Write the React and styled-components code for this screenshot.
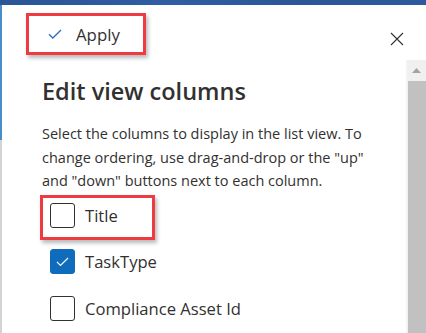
import React from "react";
import styled, { createGlobalStyle } from "styled-components";

const Global = createGlobalStyle`
  html, body { margin: 0; padding: 0; background: #ffffff; }
  body { font-family: "Open Sans", "Noto Sans", sans-serif; color: #323130; }
`;

const Frame = styled.div`
  width: 426px;
  height: 333px;
  overflow: hidden;
  display: flex;
  flex-direction: column;
  background: #ffffff;
`;

const TopStrip = styled.div`
  height: 5px;
  flex: none;
  background: linear-gradient(90deg, #2a5597 0%, #2f5ea3 40%, #2b5699 70%, #2d5a9e 100%);
`;

const Main = styled.div`
  flex: 1;
  display: flex;
  min-height: 0;
`;

const LeftEdge = styled.div`
  width: 2px;
  flex: none;
  display: flex;
  flex-direction: column;
`;

const EdgePart = styled.div`
  height: ${(p) => (p.$grow ? "auto" : `${p.$h}px`)};
  flex: ${(p) => (p.$grow ? 1 : "none")};
  background: ${(p) => p.$color};
`;

const Panel = styled.div`
  flex: 1;
  display: flex;
  flex-direction: column;
  min-width: 0;
`;

const Header = styled.div`
  height: 55px;
  flex: none;
  display: flex;
  align-items: flex-start;
  justify-content: space-between;
  padding: 8px 0 0 24px;
  box-sizing: border-box;
`;

const Highlight = styled.div`
  position: relative;
  align-self: flex-start;
  &::after {
    content: "";
    position: absolute;
    pointer-events: none;
    top: ${(p) => p.$t}px;
    left: ${(p) => p.$l}px;
    right: ${(p) => p.$r}px;
    bottom: ${(p) => p.$b}px;
    border: 3px solid #ee3b42;
    box-shadow: 2px 3px 4px rgba(0, 0, 0, 0.28);
  }
`;

const ApplyButton = styled.button`
  height: 42px;
  width: 120px;
  border: none;
  background: transparent;
  display: flex;
  align-items: center;
  gap: 14px;
  padding: 0 0 0 22px;
  font-family: inherit;
  font-size: 16.8px;
  color: #323130;
  cursor: pointer;
`;

const CloseButton = styled.button`
  margin: 14px 17px 0 0;
  width: 24px;
  height: 24px;
  border: none;
  background: transparent;
  padding: 0;
  display: flex;
  align-items: center;
  justify-content: center;
  color: #323130;
`;

const ScrollRow = styled.div`
  flex: 1;
  display: flex;
  min-height: 0;
`;

const Content = styled.div`
  flex: 1;
  padding: 14px 0 0 40px;
  min-width: 0;
`;

const Heading = styled.h2`
  margin: 0;
  font-size: 23.5px;
  line-height: 34px;
  font-weight: 600;
  color: #323130;
`;

const Description = styled.p`
  margin: 14px 0 0 0;
  font-size: 14.5px;
  line-height: 23.5px;
  color: #323130;
  white-space: nowrap;
`;

const List = styled.div`
  display: flex;
  flex-direction: column;
  gap: 21.5px;
  margin-top: 10px;
  padding-left: 8px;
`;

const Row = styled.label`
  display: flex;
  align-items: center;
  gap: 10px;
  font-size: 16.6px;
  color: #323130;
  height: 25px;
`;

const Box = styled.span`
  width: 25px;
  height: 25px;
  box-sizing: border-box;
  border-radius: 3px;
  border: 1px solid ${(p) => (p.$checked ? "#0f6cbd" : "#323130")};
  background: ${(p) => (p.$checked ? "#0f6cbd" : "#ffffff")};
  display: flex;
  align-items: center;
  justify-content: center;
  flex: none;
`;

const Scrollbar = styled.div`
  width: 19px;
  flex: none;
  display: flex;
  flex-direction: column;
  background: #f0f0f0;
  border-left: 1px solid #f4f4f4;
`;

const ArrowButton = styled.div`
  height: 21px;
  flex: none;
  display: flex;
  align-items: center;
  justify-content: center;
`;

const Thumb = styled.div`
  flex: 1;
  margin-left: 1px;
  background: #c1c1c1;
`;

const CheckIcon = ({ color, size = 14 }) => (
  <svg width={size} height={size * 0.72} viewBox="0 0 14 10" fill="none">
    <path d="M1 5.2 L4.8 9 L13 1" stroke={color} strokeWidth="1.3" />
  </svg>
);

const columns = [
  { name: "Title", checked: false, highlight: true },
  { name: "TaskType", checked: true },
  { name: "Compliance Asset Id", checked: false },
];

export default function App() {
  return (
    <>
      <Global />
      <Frame>
        <TopStrip />
        <Main>
          <LeftEdge>
            <EdgePart $h={135} $color="#4a8cc7" />
            <EdgePart $grow $color="#d3d3d3" />
          </LeftEdge>
          <Panel>
            <Header>
              <Highlight $t={0} $l={0} $r={0} $b={0}>
                <ApplyButton>
                  <CheckIcon color="#2f6fc0" />
                  Apply
                </ApplyButton>
              </Highlight>
              <CloseButton aria-label="Close">
                <svg width="14" height="14" viewBox="0 0 14 14">
                  <path d="M1 1 L13 13 M13 1 L1 13" stroke="#323130" strokeWidth="1.1" />
                </svg>
              </CloseButton>
            </Header>
            <ScrollRow>
              <Content>
                <Heading>Edit view columns</Heading>
                <Description>
                  Select the columns to display in the list view. To
                  <br />
                  change ordering, use drag-and-drop or the "up"
                  <br />
                  and "down" buttons next to each column.
                </Description>
                <List>
                  {columns.map((c) =>
                    c.highlight ? (
                      <Highlight key={c.name} $t={-8} $l={-10} $r={-37} $b={-12}>
                        <Row>
                          <Box $checked={c.checked} />
                          {c.name}
                        </Row>
                      </Highlight>
                    ) : (
                      <Row key={c.name}>
                        <Box $checked={c.checked}>
                          {c.checked && <CheckIcon color="#ffffff" size={13} />}
                        </Box>
                        {c.name}
                      </Row>
                    )
                  )}
                </List>
              </Content>
              <Scrollbar>
                <ArrowButton>
                  <svg width="9" height="5" viewBox="0 0 9 5">
                    <path d="M0 5 L4.5 0 L9 5 Z" fill="#a3a3a3" />
                  </svg>
                </ArrowButton>
                <Thumb />
              </Scrollbar>
            </ScrollRow>
          </Panel>
        </Main>
      </Frame>
    </>
  );
}
